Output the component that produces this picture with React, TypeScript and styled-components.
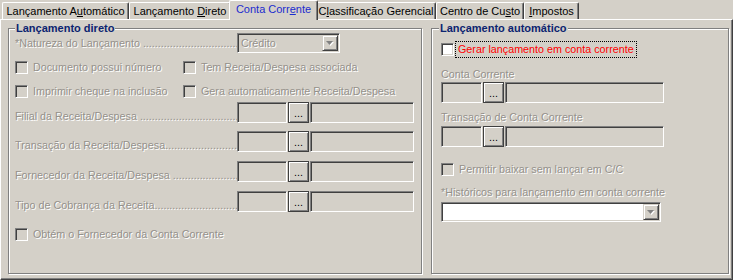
import React from 'react';
import styled, { createGlobalStyle, css } from 'styled-components';

const Global = createGlobalStyle`
  html, body { margin: 0; padding: 0; background: #d4d0c8; }
  body { font-family: "Liberation Sans", Arial, sans-serif; font-size: 11px; }
`;

const Window = styled.div`
  width: 733px;
  height: 280px;
  background: #d4d0c8;
  overflow: hidden;
  font-family: "Liberation Sans", Arial, sans-serif;
  font-size: 10.75px;
  line-height: 13px;
  color: #000;
`;

const TabStrip = styled.div`
  box-sizing: border-box;
  display: flex;
  align-items: flex-end;
  height: 19px;
  padding-left: 2px;
  position: relative;
  z-index: 1;
`;

const Tab = styled.div<{ $w: number; $active?: boolean }>`
  box-sizing: border-box;
  flex: none;
  width: ${(p) => p.$w + (p.$active ? 4 : 0)}px;
  height: ${(p) => (p.$active ? 20 : 17)}px;
  margin: ${(p) => (p.$active ? '0 -2px -1px' : '0')};
  position: relative;
  z-index: ${(p) => (p.$active ? 2 : 1)};
  background: #d4d0c8;
  border-top: 1px solid #fff;
  border-left: 1px solid #fff;
  border-right: 1px solid #404040;
  border-radius: 2px 2px 0 0;
  box-shadow: inset -1px 0 0 #808080;
  padding-top: 2px;
  text-align: center;
  white-space: nowrap;
  font-size: 11px;
  color: ${(p) => (p.$active ? '#1b2ccf' : '#000')};
`;

const Mn = styled.span`
  text-decoration: underline;
`;

const Panel = styled.div`
  box-sizing: border-box;
  height: 261px;
  border-top: 1px solid #fff;
  border-left: 1px solid #fff;
  border-right: 1px solid #404040;
  border-bottom: 1px solid #404040;
  box-shadow: inset -1px -1px 0 #808080;
  padding: 8px 3px 5px 7px;
  display: flex;
  gap: 9px;
  align-items: flex-start;
`;

const Group = styled.div<{ $w: number; $pl: number }>`
  position: relative;
  box-sizing: border-box;
  flex: none;
  width: ${(p) => p.$w}px;
  height: 246px;
  border: 1px solid #808080;
  box-shadow: inset 1px 1px 0 #fff, 1px 1px 0 #fff;
  padding-left: ${(p) => p.$pl}px;
  display: flex;
  flex-direction: column;
`;

const GroupTitle = styled.div<{ $left: number }>`
  position: absolute;
  top: -7px;
  left: ${(p) => p.$left}px;
  padding: 0 1px;
  background: #d4d0c8;
  color: #0c2470;
  font-weight: bold;
  font-size: 11px;
  line-height: 13px;
  white-space: nowrap;
`;

const disabled = css`
  color: #94918b;
  text-shadow: 1px 1px 0 #fff;
`;

const Row = styled.div<{ $mt: number; $h: number; $bottom?: boolean }>`
  display: flex;
  flex: none;
  align-items: ${(p) => (p.$bottom ? 'flex-end' : 'center')};
  margin-top: ${(p) => p.$mt}px;
  height: ${(p) => p.$h}px;
`;

const DotLabel = styled.div<{ $w: number }>`
  flex: none;
  width: ${(p) => p.$w}px;
  overflow: hidden;
  white-space: nowrap;
  line-height: 13px;
  ${disabled}
`;

const PlainLabel = styled.div<{ $mt: number }>`
  flex: none;
  margin-top: ${(p) => p.$mt}px;
  line-height: 13px;
  white-space: nowrap;
  ${disabled}
`;

const sunken = css`
  box-sizing: border-box;
  border: 1px solid;
  border-color: #808080 #fff #fff #808080;
  box-shadow: inset 1px 1px 0 #404040, inset -1px -1px 0 #d4d0c8;
`;

const CheckItem = styled.div<{ $w?: number }>`
  display: flex;
  align-items: center;
  gap: 5px;
  flex: none;
  width: ${(p) => (p.$w ? `${p.$w}px` : 'auto')};
  white-space: nowrap;
`;

const CheckBox = styled.span<{ $enabled?: boolean }>`
  ${sunken}
  flex: none;
  width: 13px;
  height: 13px;
  background: ${(p) => (p.$enabled ? '#fff' : '#d4d0c8')};
`;

const CheckText = styled.span`
  line-height: 13px;
  ${disabled}
`;

const FocusLabel = styled.span`
  box-sizing: border-box;
  height: 17px;
  margin-left: 1px;
  padding: 0 2px;
  border: 1px dotted #000;
  color: #f00;
  line-height: 15px;
  white-space: nowrap;
`;

const Field = styled.div<{ $w: number; $ml?: number }>`
  ${sunken}
  flex: none;
  width: ${(p) => p.$w}px;
  height: 100%;
  margin-left: ${(p) => p.$ml ?? 0}px;
  background: #d4d0c8;
`;

const Ellipsis = styled.div<{ $ml?: number }>`
  box-sizing: border-box;
  flex: none;
  width: 21px;
  height: 100%;
  margin-left: ${(p) => p.$ml ?? 0}px;
  border: 1px solid #404040;
  box-shadow: inset 1px 1px 0 #fff, inset -1px -1px 0 #808080;
  background: #d4d0c8;
  padding-top: 4px;
  text-align: center;
  line-height: 13px;
  color: #000;
`;

const Combo = styled.div<{ $w: number; $white?: boolean }>`
  ${sunken}
  flex: none;
  display: flex;
  align-items: center;
  width: ${(p) => p.$w}px;
  height: 20px;
  padding: 1px;
  background: ${(p) => (p.$white ? '#fff' : '#d4d0c8')};
`;

const ComboText = styled.span`
  flex: 1;
  padding-left: 2px;
  line-height: 13px;
  white-space: nowrap;
  ${disabled}
`;

const ComboButton = styled.span`
  box-sizing: border-box;
  flex: none;
  width: 16px;
  height: 16px;
  border: 1px solid;
  border-color: #d4d0c8 #404040 #404040 #d4d0c8;
  box-shadow: inset 1px 1px 0 #fff, inset -1px -1px 0 #808080;
  background: #d4d0c8;
  display: flex;
  align-items: center;
  justify-content: center;
`;

const Arrow = () => (
  <svg width="8" height="5" viewBox="0 0 8 5">
    <polygon points="1,1 8,1 4.5,5" fill="#fff" />
    <polygon points="0,0 7,0 3.5,4" fill="#808080" />
  </svg>
);

const DOTS = '.'.repeat(90);

const FieldRow = ({ mt, label }: { mt: number; label: string }) => (
  <Row $mt={mt} $h={21} $bottom>
    <DotLabel $w={222}>{label + DOTS}</DotLabel>
    <Field $w={50} />
    <Ellipsis $ml={1}>...</Ellipsis>
    <Field $w={104} $ml={1} />
  </Row>
);

const LookupRow = ({ mt }: { mt: number }) => (
  <Row $mt={mt} $h={21}>
    <Field $w={41} />
    <Ellipsis $ml={1}>...</Ellipsis>
    <Field $w={159} $ml={1} />
  </Row>
);

export default function App() {
  return (
    <Window>
      <Global />
      <TabStrip>
        <Tab $w={127}>
          Lançamento A<Mn>u</Mn>tomático
        </Tab>
        <Tab $w={102}>
          Lançamento <Mn>D</Mn>ireto
        </Tab>
        <Tab $w={85} $active>
          Conta Corr<Mn>e</Mn>nte
        </Tab>
        <Tab $w={120}>
          C<Mn>l</Mn>assificação Gerencial
        </Tab>
        <Tab $w={88}>
          Centro de Cu<Mn>s</Mn>to
        </Tab>
        <Tab $w={55}>
          <Mn>I</Mn>mpostos
        </Tab>
      </TabStrip>
      <Panel>
        <Group $w={414} $pl={6}>
          <GroupTitle $left={6}>Lançamento direto</GroupTitle>
          <Row $mt={4} $h={20}>
            <DotLabel $w={222}>{'*Natureza do Lançamento ' + DOTS}</DotLabel>
            <Combo $w={103}>
              <ComboText>Crédito</ComboText>
              <ComboButton>
                <Arrow />
              </ComboButton>
            </Combo>
          </Row>
          <Row $mt={8} $h={13}>
            <CheckItem $w={168}>
              <CheckBox />
              <CheckText>Documento possui número</CheckText>
            </CheckItem>
            <CheckItem>
              <CheckBox />
              <CheckText>Tem Receita/Despesa associada</CheckText>
            </CheckItem>
          </Row>
          <Row $mt={11} $h={13}>
            <CheckItem $w={168}>
              <CheckBox />
              <CheckText>Imprimir cheque na inclusão</CheckText>
            </CheckItem>
            <CheckItem>
              <CheckBox />
              <CheckText>Gera automaticamente Receita/Despesa</CheckText>
            </CheckItem>
          </Row>
          <FieldRow mt={4} label="Filial da Receita/Despesa " />
          <FieldRow mt={8} label="Transação da Receita/Despesa" />
          <FieldRow mt={9} label="Fornecedor da Receita/Despesa " />
          <FieldRow mt={9} label="Tipo de Cobrança da Receita" />
          <Row $mt={16} $h={13}>
            <CheckItem>
              <CheckBox />
              <CheckText>Obtém o Fornecedor da Conta Corrente</CheckText>
            </CheckItem>
          </Row>
        </Group>
        <Group $w={298} $pl={9}>
          <GroupTitle $left={7}>Lançamento automático</GroupTitle>
          <Row $mt={12} $h={17}>
            <CheckBox $enabled />
            <FocusLabel>Gerar lançamento em conta corrente</FocusLabel>
          </Row>
          <PlainLabel $mt={10}>Conta Corrente</PlainLabel>
          <LookupRow mt={1} />
          <PlainLabel $mt={8}>Transação de Conta Corrente</PlainLabel>
          <LookupRow mt={2} />
          <Row $mt={16} $h={13}>
            <CheckItem>
              <CheckBox />
              <CheckText>Permitir baixar sem lançar em C/C</CheckText>
            </CheckItem>
          </Row>
          <PlainLabel $mt={10}>*Históricos para lançamento em conta corrente</PlainLabel>
          <Row $mt={3} $h={20}>
            <Combo $w={220} $white>
              <ComboText />
              <ComboButton>
                <Arrow />
              </ComboButton>
            </Combo>
          </Row>
        </Group>
      </Panel>
    </Window>
  );
}
